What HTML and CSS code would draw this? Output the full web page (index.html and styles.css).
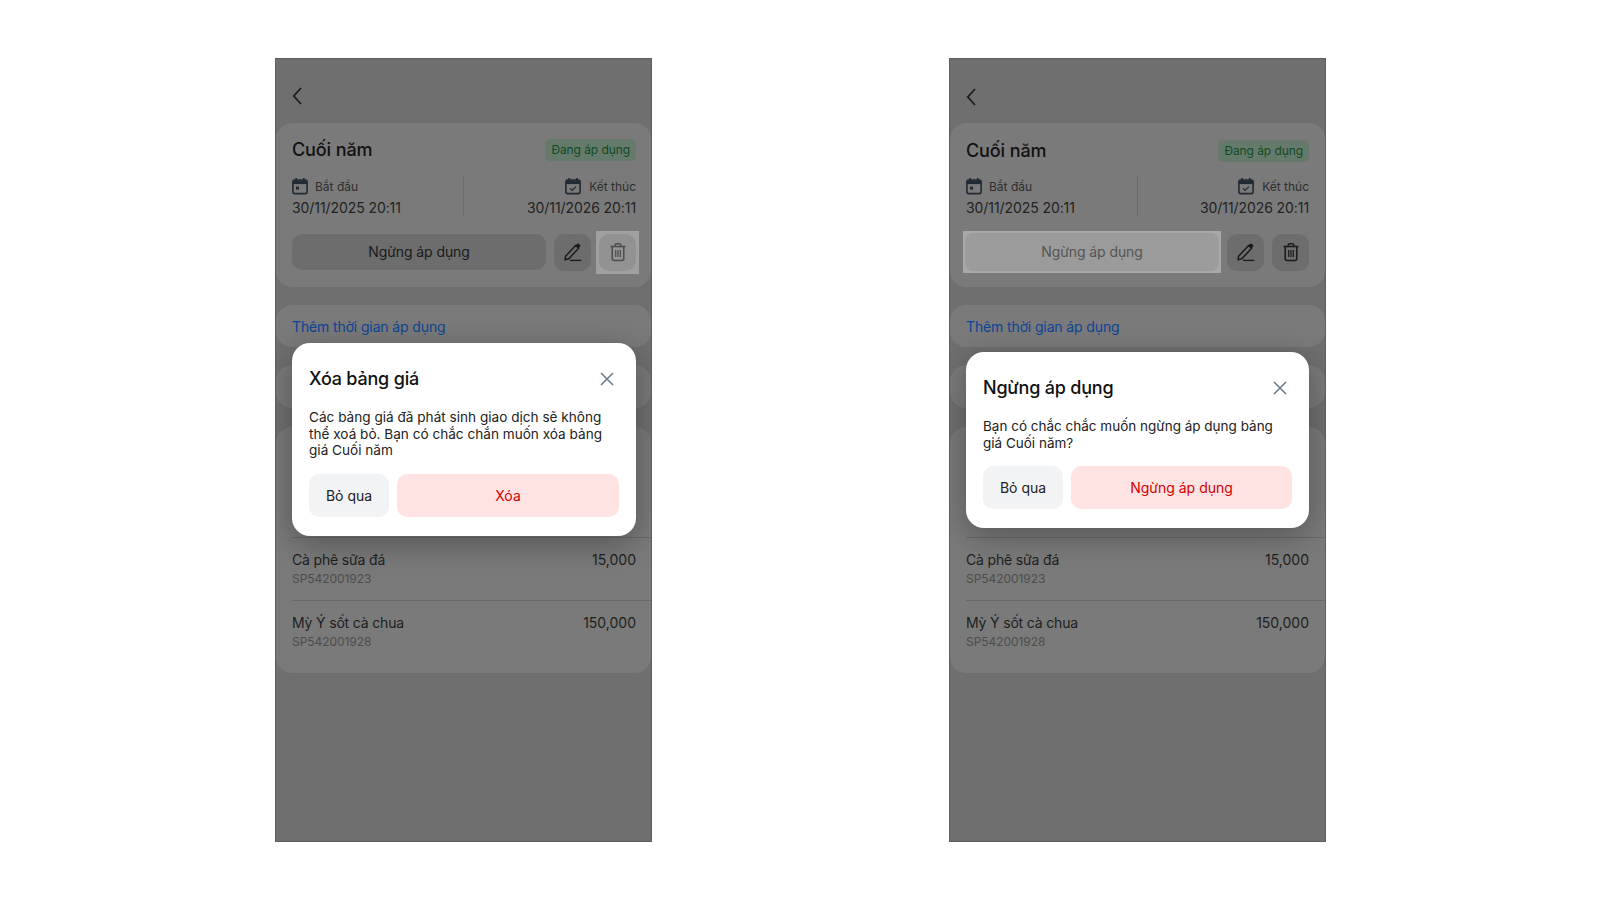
FILE: index.html
```html
<!DOCTYPE html>
<html lang="vi">
<head>
<meta charset="utf-8">
<title>Bảng giá</title>
<link rel="stylesheet" href="styles.css">
</head>
<body>
<svg class="defs" width="0" height="0" aria-hidden="true">
  <symbol id="i-start" viewBox="1 0 16 18"><path d="M5.2 1v3M12.8 1v3" fill="none" stroke="currentColor" stroke-width="1.7"/><rect x="1.9" y="3" width="14.2" height="13.6" rx="1.8" fill="none" stroke="currentColor" stroke-width="1.6"/><path d="M2 3.5h14v3.6H2z" fill="currentColor"/><rect x="5" y="9.6" width="3" height="3" fill="currentColor"/></symbol>
  <symbol id="i-end" viewBox="1 0 16 18"><path d="M5.2 1v3M12.8 1v3" fill="none" stroke="currentColor" stroke-width="1.7"/><rect x="1.9" y="3" width="14.2" height="13.6" rx="1.8" fill="none" stroke="currentColor" stroke-width="1.6"/><path d="M2 3.5h14v3.6H2z" fill="currentColor"/><path d="M6 11.4l2.1 2 3.9-3.8" fill="none" stroke="currentColor" stroke-width="1.3"/></symbol>
  <symbol id="i-edit" viewBox="0 0 20 20"><path d="M2.6 14.2 12.6 3.4l3 2.8L5.8 16.8l-3.8.9z" fill="none" stroke="currentColor" stroke-width="1.5" stroke-linejoin="round"/><path d="M12.6 3.4l1.3-1.4a1.5 1.5 0 0 1 2.1-.1l.9.8a1.5 1.5 0 0 1 .1 2.1l-1.4 1.5z" fill="currentColor"/><path d="M7 18.4h11.4" stroke="currentColor" stroke-width="1.3"/></symbol>
  <symbol id="i-trash" viewBox="0 0 20 20"><path d="M2.5 4.6h15M7.2 4.4V3.2c0-.9.6-1.4 1.4-1.4h2.8c.8 0 1.4.5 1.4 1.4v1.2" fill="none" stroke="currentColor" stroke-width="1.5"/><path d="M4.2 4.8v11.6c0 1.2.8 2 2 2h7.6c1.2 0 2-.8 2-2V4.8" fill="none" stroke="currentColor" stroke-width="1.5"/><path d="M7.7 8v7M10 8v7M12.3 8v7" stroke="currentColor" stroke-width="1.2"/></symbol>
  <symbol id="i-close" viewBox="0 0 14 14"><path d="M1 1l12 12M13 1 1 13" fill="none" stroke="currentColor" stroke-width="1.6"/></symbol>
  <symbol id="i-back" viewBox="0 0 10 18"><path d="M9 1 1.8 9 9 17" fill="none" stroke="currentColor" stroke-width="1.8"/></symbol>
</svg>
<main class="stage">

  <section class="phone">
    <div class="topbar"><svg class="back"><use href="#i-back"/></svg></div>
    <div class="card summary">
      <div class="summary-head"><h2 class="name">Cuối năm</h2><span class="badge">Đang áp dụng</span></div>
      <div class="dates">
        <div class="date"><div class="date-label"><svg class="cal"><use href="#i-start"/></svg>Bắt đầu</div><div class="date-value">30/11/2025 20:11</div></div>
        <div class="date date-end"><div class="date-label"><svg class="cal"><use href="#i-end"/></svg>Kết thúc</div><div class="date-value">30/11/2026 20:11</div></div>
      </div>
      <div class="actions">
        <div class="btn-wide"><span class="btn-main">Ngừng áp dụng</span></div>
        <span class="btn-icon"><svg class="ico"><use href="#i-edit"/></svg></span>
        <span class="hl-box"><span class="btn-icon is-active"><svg class="ico"><use href="#i-trash"/></svg></span></span>
      </div>
    </div>
    <div class="card link-card"><a class="link">Thêm thời gian áp dụng</a></div>
    <div class="card blank-card"></div>
    <div class="card list-card">
      <div class="row"><div><div class="row-name">Cà phê sữa đá</div><div class="row-sku">SP542001923</div></div><div class="row-price">15,000</div></div>
      <div class="row"><div><div class="row-name">Mỳ Ý sốt cà chua</div><div class="row-sku">SP542001928</div></div><div class="row-price">150,000</div></div>
    </div>
    <div class="dialog dialog-delete">
      <div class="dialog-head"><h3 class="dialog-title">Xóa bảng giá</h3><svg class="close"><use href="#i-close"/></svg></div>
      <p class="dialog-text">Các bảng giá đã phát sinh giao dịch sẽ không thể xoá bỏ. Bạn có chắc chắn muốn xóa bảng giá Cuối năm</p>
      <div class="dialog-actions"><span class="btn-cancel">Bỏ qua</span><span class="btn-danger">Xóa</span></div>
    </div>
  </section>

  <section class="phone phone-stop">
    <div class="topbar"><svg class="back"><use href="#i-back"/></svg></div>
    <div class="card summary">
      <div class="summary-head"><h2 class="name">Cuối năm</h2><span class="badge">Đang áp dụng</span></div>
      <div class="dates">
        <div class="date"><div class="date-label"><svg class="cal"><use href="#i-start"/></svg>Bắt đầu</div><div class="date-value">30/11/2025 20:11</div></div>
        <div class="date date-end"><div class="date-label"><svg class="cal"><use href="#i-end"/></svg>Kết thúc</div><div class="date-value">30/11/2026 20:11</div></div>
      </div>
      <div class="actions">
        <div class="btn-wide is-highlighted"><span class="btn-main">Ngừng áp dụng</span></div>
        <span class="btn-icon"><svg class="ico"><use href="#i-edit"/></svg></span>
        <span class="btn-icon"><svg class="ico"><use href="#i-trash"/></svg></span>
      </div>
    </div>
    <div class="card link-card"><a class="link">Thêm thời gian áp dụng</a></div>
    <div class="card blank-card"></div>
    <div class="card list-card">
      <div class="row"><div><div class="row-name">Cà phê sữa đá</div><div class="row-sku">SP542001923</div></div><div class="row-price">15,000</div></div>
      <div class="row"><div><div class="row-name">Mỳ Ý sốt cà chua</div><div class="row-sku">SP542001928</div></div><div class="row-price">150,000</div></div>
    </div>
    <div class="dialog dialog-stop">
      <div class="dialog-head"><h3 class="dialog-title">Ngừng áp dụng</h3><svg class="close"><use href="#i-close"/></svg></div>
      <p class="dialog-text">Bạn có chắc chắc muốn ngừng áp dụng bảng giá Cuối năm?</p>
      <div class="dialog-actions"><span class="btn-cancel">Bỏ qua</span><span class="btn-danger">Ngừng áp dụng</span></div>
    </div>
  </section>

</main>
</body>
</html>
```

FILE: styles.css
```css
* { box-sizing: border-box; }
html, body { margin: 0; padding: 0; height: 100%; background: #fff; }
body { font-family: Inter, "Noto Sans", "Liberation Sans", sans-serif; color: #1a1a1a; overflow: hidden; }
.defs { position: absolute; }
.stage { display: flex; gap: 297px; padding: 58px 0 0 275px; }

.phone {
  position: relative;
  width: 377px;
  height: 784px;
  background: #6f6f6f;
  border: 1px solid #5e5e5e;
  overflow: hidden;
}
.topbar { height: 64px; padding: 28px 0 0 16px; color: #1c1c1c; }
.phone-stop .topbar { padding-top: 29px; }
.back { display: block; width: 10px; height: 18px; }

.card { background: #7a7a7a; border-radius: 16px; }
.summary { height: 164px; padding: 16px 15px 0 16px; }
.phone-stop .summary { padding-right: 16px; }
.phone-stop .summary-head { margin-top: 1px; }
.phone-stop .dates { margin-top: 14px; }
.summary-head { display: flex; justify-content: space-between; align-items: center; height: 22px; }
.name { margin: 0; font-size: 18px; line-height: 22px; font-weight: 500; color: #111; letter-spacing: -.1px; }
.badge { height: 22px; padding: 0 6px; border-radius: 5px; background: #667a6c; color: #0f4a22; font-size: 12px; line-height: 22px; letter-spacing: -.08px; }

.dates { display: flex; height: 40px; margin-top: 15px; }
.date { flex: 0 0 171px; }
.date-end { flex: 1; border-left: 1px solid #6b6b6b; text-align: right; }
.date-label { display: flex; align-items: center; gap: 7px; height: 20px; font-size: 12px; color: #2e2e2e; }
.date-end .date-label { justify-content: flex-end; gap: 8.5px; }
.cal { width: 16px; height: 18px; color: #222a33; }
.date-value { margin-top: 2px; font-size: 14px; line-height: 20px; color: #222; letter-spacing: -.08px; }

.actions { display: flex; align-items: center; gap: 8px; margin-top: 18px; height: 36px; }
.btn-wide { flex: 1; display: flex; }
.btn-main { flex: 1; height: 36px; border-radius: 10px; background: #6d6d6d; font-size: 14px; line-height: 36px; text-align: center; color: #1a1a1a; letter-spacing: -.08px; }
.btn-wide.is-highlighted { margin: -3px -2px -3px -3px; padding: 2px; background: #a9a9a9; }
.btn-wide.is-highlighted .btn-main { height: 38px; line-height: 38px; background: #9b9b9b; color: #555; border-radius: 8px; }
.btn-icon { display: flex; align-items: center; justify-content: center; width: 37px; height: 37px; border-radius: 10px; background: #6d6d6d; color: #1a1a1a; }
.ico { width: 20px; height: 20px; }
.hl-box { margin: -3px; padding: 3px; background: #a0a0a0; display: flex; }
.btn-icon.is-active { background: #929292; color: #4d4d4d; }

.link-card { height: 42px; margin-top: 18px; padding: 12px 16px 0; }
.link { display: block; font-size: 14px; line-height: 20px; color: #0c4596; letter-spacing: -.13px; }
.blank-card { height: 43px; margin-top: 18px; }
.list-card { height: 246px; margin-top: 19px; padding-top: 110px; }
.row { display: flex; justify-content: space-between; height: 63px; margin-left: 16px; padding: 12px 15px 0 0; border-top: 1px solid #686868; }
.phone-stop .row { padding-right: 16px; }
.row-name, .row-price { font-size: 14px; line-height: 20px; color: #1e1e1e; }
.row-name { letter-spacing: -.16px; }
.row-sku { font-size: 12px; line-height: 18px; color: #4d4d4d; letter-spacing: -.05px; }

.dialog {
  position: absolute;
  left: 16px;
  width: 344px;
  padding: 17px 17px 19px;
  background: #fff;
  border-radius: 18px;
  box-shadow: 0 8px 32px rgba(0,0,0,.3);
}
.dialog-delete { top: 284px; }
.dialog-stop { top: 293px; width: 343px; }
.dialog-head { display: flex; align-items: center; justify-content: space-between; height: 22px; padding-right: 5px; margin-top: 8px; }
.dialog-title { margin: 0; font-size: 18px; line-height: 22px; font-weight: 500; color: #111; letter-spacing: -.2px; }
.close { width: 14px; height: 14px; color: #6b7c8f; }
.dialog-text { margin: 19px 0 0; font-size: 13.6px; line-height: 16.6px; color: #222; }
.dialog-stop .dialog-text { font-size: 13.5px; }
.dialog-actions { display: flex; gap: 8px; margin-top: 15px; }
.btn-cancel { width: 80px; height: 43px; border-radius: 10px; background: #f1f3f5; font-size: 14px; line-height: 43px; text-align: center; color: #222; }
.btn-danger { flex: 1; height: 43px; border-radius: 10px; background: #ffe3e3; font-size: 14px; line-height: 43px; text-align: center; color: #d40000; }
```
